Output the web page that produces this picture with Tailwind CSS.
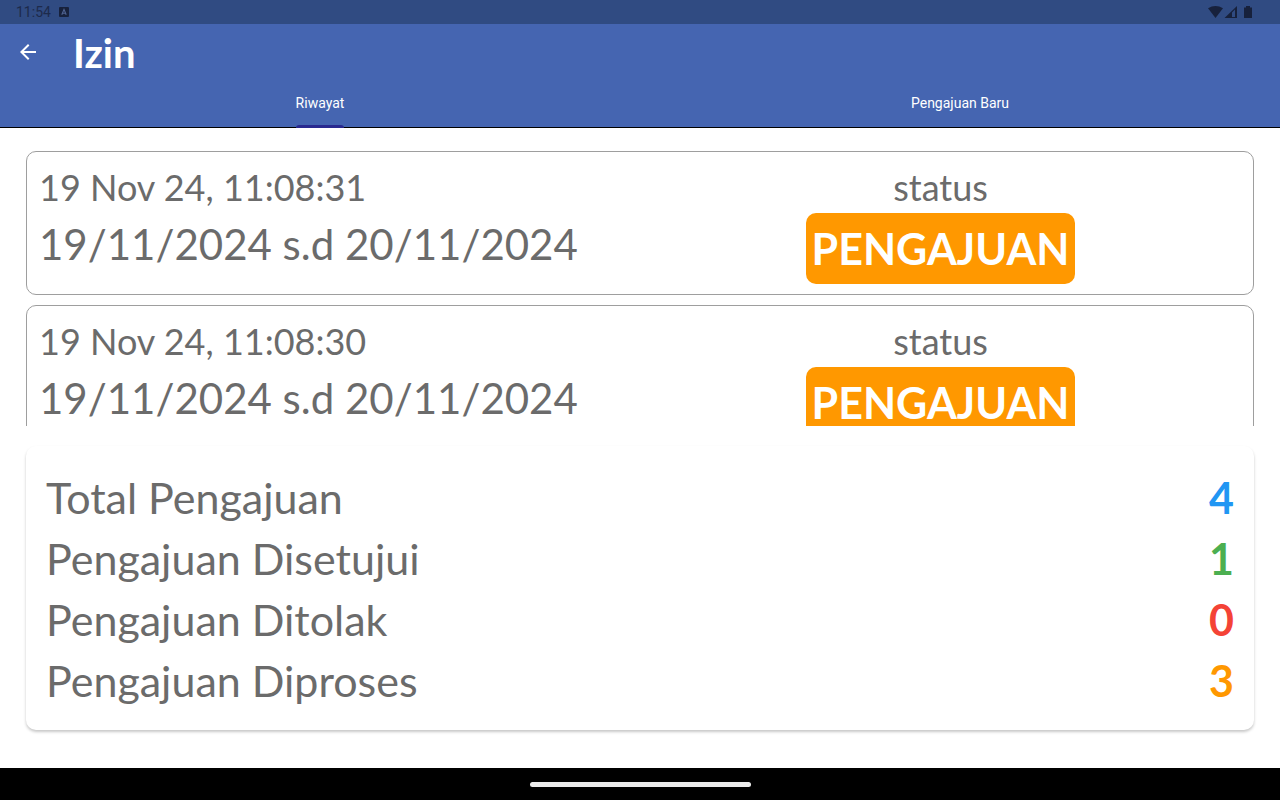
<!DOCTYPE html>
<html lang="id">
<head>
  <meta charset="UTF-8">
  <meta name="viewport" content="width=device-width, initial-scale=1.0">
  <title>Izin</title>
  <script src="https://cdn.jsdelivr.net/npm/@tailwindcss/browser@4"></script>
</head>
<body class="h-screen flex flex-col overflow-hidden bg-white font-['Lato',sans-serif] text-[#6b6b6b]">
  <!-- Status bar -->
  <div class="h-6 shrink-0 flex items-center justify-between pl-4 pr-[26px] bg-[#304b82] text-[#1d2a4b] font-['Roboto',sans-serif]">
    <div class="flex items-center gap-2">
      <span class="text-sm">11:54</span>
      <svg class="size-[10px]" viewBox="0 0 10 10" fill="none">
        <rect width="10" height="10" rx="1" fill="#17213c"/>
        <path d="M2.8 7.8L5 2.4l2.2 5.4M3.6 6.2h2.8" stroke="#506493" stroke-width="1.1"/>
      </svg>
    </div>
    <svg class="w-[46px] h-3" viewBox="0 0 46 12" fill="#17213c">
      <path d="M0 2.200Q7.500-2.200 15 2.200L7.500 12Z"/>
      <path d="M16.500 12L29 0v12zM24 6.500V11h3V3.500z" fill-rule="evenodd"/>
      <path d="M36 1.500h2V0h4v1.500h2V12h-8z"/>
    </svg>
  </div>

  <!-- App bar -->
  <header class="shrink-0 bg-[#4565b1] text-white border-b border-black">
    <div class="h-14 flex items-center pl-4">
      <button type="button" aria-label="Kembali" class="size-6">
        <svg class="size-6" viewBox="0 0 24 24" fill="currentColor">
          <path d="M20 11H7.830l5.590-5.590L12 4l-8 8 8 8 1.410-1.410L7.830 13H20v-2z"/>
        </svg>
      </button>
      <h1 class="pl-[33px] pt-[2px] text-[40px] leading-14 font-bold">Izin</h1>
    </div>
    <nav class="grid grid-cols-2 h-[47px] font-['Roboto',sans-serif] text-sm">
      <button type="button" class="flex flex-col items-center">
        <span class="h-12 shrink-0 flex flex-col justify-between pt-[13px]">
          Riwayat
          <span class="h-[3px] rounded-t-[3px] bg-[#29298f]"></span>
        </span>
      </button>
      <button type="button" class="flex flex-col items-center">
        <span class="pt-[13px]">Pengajuan Baru</span>
      </button>
    </nav>
  </header>

  <!-- Riwayat -->
  <main class="flex-1 min-h-0 flex flex-col px-[26px] pb-[38px]">
    <ul class="flex-1 min-h-0 overflow-hidden pt-[23px]">
      <li class="grid grid-cols-2 h-36 mb-[10px] px-3 pt-2 rounded-[10px] border border-[#9e9e9e]">
        <div>
          <p class="text-[36px] leading-[54px]">19 Nov 24, 11:08:31</p>
          <p class="text-[42px] leading-[60px]">19/11/2024 s.d 20/11/2024</p>
        </div>
        <div class="flex flex-col items-center">
          <p class="pt-[2px] text-[36px] leading-[51px]">status</p>
          <p class="h-[71px] px-[6px] rounded-[10px] bg-[#ff9800] text-white text-[43px] leading-[71px] font-bold">PENGAJUAN</p>
        </div>
      </li>
      <li class="grid grid-cols-2 h-36 mb-[10px] px-3 pt-2 rounded-[10px] border border-[#9e9e9e]">
        <div>
          <p class="text-[36px] leading-[54px]">19 Nov 24, 11:08:30</p>
          <p class="text-[42px] leading-[60px]">19/11/2024 s.d 20/11/2024</p>
        </div>
        <div class="flex flex-col items-center">
          <p class="pt-[2px] text-[36px] leading-[51px]">status</p>
          <p class="h-[71px] px-[6px] rounded-[10px] bg-[#ff9800] text-white text-[43px] leading-[71px] font-bold">PENGAJUAN</p>
        </div>
      </li>
    </ul>

    <!-- Ringkasan -->
    <dl class="shrink-0 mt-5 px-5 pt-[21px] pb-[19px] rounded-[10px] shadow-[0_2px_3px_rgba(0,0,0,0.22)] text-[43px] leading-[61px]">
      <div class="flex justify-between">
        <dt>Total Pengajuan</dt>
        <dd class="font-bold text-[#2196f3]">4</dd>
      </div>
      <div class="flex justify-between">
        <dt>Pengajuan Disetujui</dt>
        <dd class="font-bold text-[#4caf50]">1</dd>
      </div>
      <div class="flex justify-between">
        <dt>Pengajuan Ditolak</dt>
        <dd class="font-bold text-[#f44336]">0</dd>
      </div>
      <div class="flex justify-between">
        <dt>Pengajuan Diproses</dt>
        <dd class="font-bold text-[#ff9800]">3</dd>
      </div>
    </dl>
  </main>

  <!-- Navigation bar -->
  <div class="h-8 shrink-0 flex items-center justify-center bg-black">
    <div class="w-[221px] h-[5px] rounded-full bg-[#ebebeb]"></div>
  </div>
</body>
</html>
